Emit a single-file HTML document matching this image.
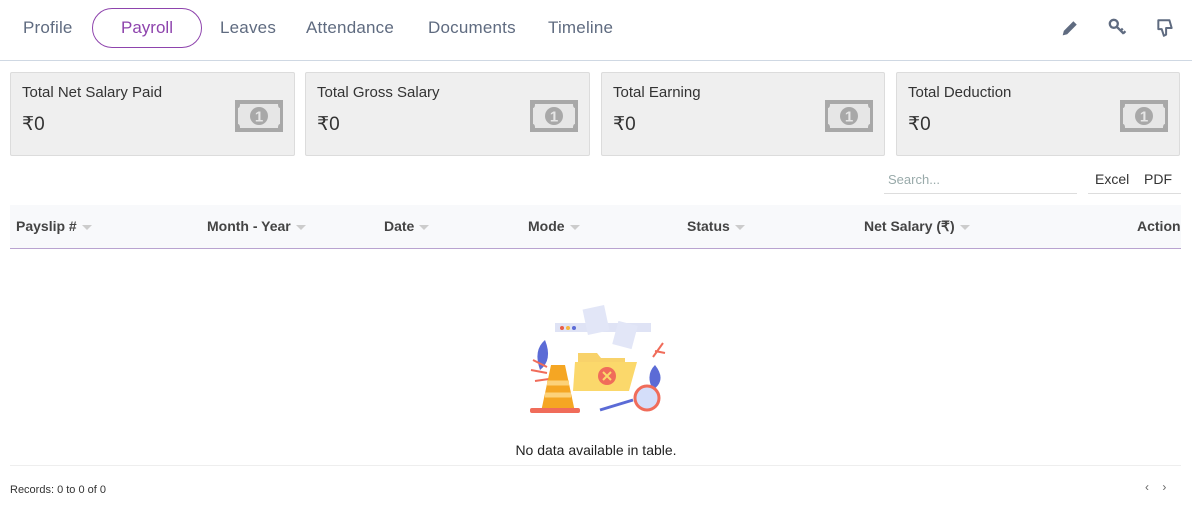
<!DOCTYPE html>
<html><head><meta charset="utf-8"><style>
*{margin:0;padding:0;box-sizing:border-box}
body{width:1192px;height:509px;background:#fff;font-family:"Liberation Sans",sans-serif;position:relative;overflow:hidden;color:#333}
.tab{position:absolute;top:18px;font-size:17px;color:#5f6b80;letter-spacing:0.2px}
.pill{position:absolute;left:92px;top:8px;width:110px;height:40px;border:1.5px solid #8e44ad;border-radius:20px;color:#8e44ad;font-size:17px;text-align:center;line-height:38px}
.hr{position:absolute;left:0;top:60px;width:1192px;height:1px;background:#cfd8e3}
.card{position:absolute;top:72px;height:84px;background:#efefef;border:1px solid #dcdcdc;border-radius:2px}
.card .t{position:absolute;left:11px;top:11px;font-size:15px;color:#333}
.card .v{position:absolute;left:11px;top:40px;font-size:19px;color:#333}
.card svg{position:absolute;right:11px;top:27px}
.th{position:absolute;top:218px;font-size:14px;font-weight:bold;color:#444}
.car{display:inline-block;width:0;height:0;border-left:5px solid transparent;border-right:5px solid transparent;border-top:5px solid #ccc;margin-left:5px;vertical-align:middle}
</style></head><body>
<div class="tab" style="left:23px">Profile</div>
<div class="pill">Payroll</div>
<div class="tab" style="left:220px">Leaves</div>
<div class="tab" style="left:306px">Attendance</div>
<div class="tab" style="left:428px">Documents</div>
<div class="tab" style="left:548px">Timeline</div>
<svg style="position:absolute;left:1061px;top:19px" width="18" height="18" viewBox="0 0 16 16"><path d="M1.5 14.5 L2.5 10.5 L11 2 L14 5 L5.5 13.5 Z" fill="#5f6b80"/></svg>
<svg style="position:absolute;left:1108px;top:18px" width="19" height="19" viewBox="0 0 18 18"><circle cx="5.5" cy="5.5" r="3.8" fill="none" stroke="#5f6b80" stroke-width="2.2"/><path d="M8 8 L15 15 M12 12 L14 10 M14.5 14.5 L16.5 12.5" stroke="#5f6b80" stroke-width="2.2" fill="none"/></svg>
<svg style="position:absolute;left:1156px;top:18px" width="18" height="20" viewBox="0 0 16 18"><path d="M2 2 H12 L14 9 H9 L9 15 L7 16 L5 10 H2 Z" fill="none" stroke="#5f6b80" stroke-width="1.8" stroke-linejoin="round"/></svg>
<div class="hr"></div>

<div class="card" style="left:10px;width:285px"><div class="t">Total Net Salary Paid</div><div class="v">₹0</div><svg width="48" height="32" viewBox="0 0 48 32"><rect width="48" height="32" fill="#a8a8a8"/><path d="M5 4 H43 Q43 8 45 8 V24 Q43 24 43 28 H5 Q5 24 3 24 V8 Q5 8 5 4Z" fill="#e6e6e6"/><circle cx="24" cy="16" r="9" fill="#a8a8a8"/><text x="24" y="21.5" font-size="15" font-weight="bold" fill="#e6e6e6" text-anchor="middle" font-family="Liberation Sans">1</text></svg></div>
<div class="card" style="left:305px;width:285px"><div class="t">Total Gross Salary</div><div class="v">₹0</div><svg width="48" height="32" viewBox="0 0 48 32"><rect width="48" height="32" fill="#a8a8a8"/><path d="M5 4 H43 Q43 8 45 8 V24 Q43 24 43 28 H5 Q5 24 3 24 V8 Q5 8 5 4Z" fill="#e6e6e6"/><circle cx="24" cy="16" r="9" fill="#a8a8a8"/><text x="24" y="21.5" font-size="15" font-weight="bold" fill="#e6e6e6" text-anchor="middle" font-family="Liberation Sans">1</text></svg></div>
<div class="card" style="left:601px;width:284px"><div class="t">Total Earning</div><div class="v">₹0</div><svg width="48" height="32" viewBox="0 0 48 32"><rect width="48" height="32" fill="#a8a8a8"/><path d="M5 4 H43 Q43 8 45 8 V24 Q43 24 43 28 H5 Q5 24 3 24 V8 Q5 8 5 4Z" fill="#e6e6e6"/><circle cx="24" cy="16" r="9" fill="#a8a8a8"/><text x="24" y="21.5" font-size="15" font-weight="bold" fill="#e6e6e6" text-anchor="middle" font-family="Liberation Sans">1</text></svg></div>
<div class="card" style="left:896px;width:284px"><div class="t">Total Deduction</div><div class="v">₹0</div><svg width="48" height="32" viewBox="0 0 48 32"><rect width="48" height="32" fill="#a8a8a8"/><path d="M5 4 H43 Q43 8 45 8 V24 Q43 24 43 28 H5 Q5 24 3 24 V8 Q5 8 5 4Z" fill="#e6e6e6"/><circle cx="24" cy="16" r="9" fill="#a8a8a8"/><text x="24" y="21.5" font-size="15" font-weight="bold" fill="#e6e6e6" text-anchor="middle" font-family="Liberation Sans">1</text></svg></div>

<div style="position:absolute;left:884px;top:172px;width:193px;font-size:13px;color:#9aa;padding-left:4px">Search...</div>
<div style="position:absolute;left:884px;top:193px;width:193px;height:1px;background:#ddd"></div>
<div style="position:absolute;left:1088px;top:193px;width:93px;height:1px;background:#ddd"></div>
<div style="position:absolute;left:1095px;top:171px;font-size:14px;color:#333">Excel</div>
<div style="position:absolute;left:1144px;top:171px;font-size:14px;color:#333">PDF</div>

<div style="position:absolute;left:10px;top:205px;width:1171px;height:44px;background:#f8f9fb;border-bottom:1.5px solid #b9a3d0"></div>
<div class="th" style="left:16px">Payslip #<span class="car"></span></div>
<div class="th" style="left:207px">Month - Year<span class="car"></span></div>
<div class="th" style="left:384px">Date<span class="car"></span></div>
<div class="th" style="left:528px">Mode<span class="car"></span></div>
<div class="th" style="left:687px">Status<span class="car"></span></div>
<div class="th" style="left:864px">Net Salary (₹)<span class="car"></span></div>
<div class="th" style="left:1137px">Action</div>

<svg style="position:absolute;left:525px;top:295px" width="145" height="125" viewBox="0 0 145 125">
<rect x="30" y="28" width="96" height="9" fill="#dfe3f5"/>
<circle cx="37" cy="33" r="2" fill="#e85d4a"/><circle cx="43" cy="33" r="2" fill="#f5b841"/><circle cx="49" cy="33" r="2" fill="#5b6bd6"/>
<rect x="60" y="12" width="22" height="26" fill="#e2e6f7" transform="rotate(-12 71 25)"/>
<rect x="90" y="28" width="20" height="24" fill="#e2e6f7" transform="rotate(15 100 40)"/>
<path d="M20 45 Q8 55 15 75 Q28 65 20 45Z" fill="#5b6bd6"/>
<path d="M130 70 Q120 80 128 95 Q142 85 130 70Z" fill="#5b6bd6"/>
<path d="M22 72 L8 65 M22 78 L6 75 M24 84 L10 86" stroke="#f06c5a" stroke-width="2"/>
<path d="M128 62 L138 48 M130 56 L140 58" stroke="#f06c5a" stroke-width="2"/>
<path d="M53 58 H72 L76 63 H100 V92 H53Z" fill="#f8d26a"/>
<path d="M50 67 H112 L104 96 H48Z" fill="#fbd86b"/>
<circle cx="82" cy="81" r="9" fill="#f06c5a"/>
<path d="M78 77 L86 85 M86 77 L78 85" stroke="#fbd86b" stroke-width="2"/>
<path d="M16 117 L26 70 H40 L50 117Z" fill="#f5a623"/>
<path d="M22 88 H44 M20 100 H46" stroke="#fcd27a" stroke-width="5"/>
<rect x="5" y="113" width="50" height="5" rx="2" fill="#f06c5a"/>
<path d="M75 115 L108 105" stroke="#5b6bd6" stroke-width="3"/>
<circle cx="122" cy="103" r="12" fill="#d4defa" stroke="#f06c5a" stroke-width="3"/>
</svg>

<div style="position:absolute;left:0;width:1192px;top:442px;text-align:center;font-size:14px;color:#222">No data available in table.</div>
<div style="position:absolute;left:10px;top:465px;width:1171px;height:1px;background:#eee"></div>
<div style="position:absolute;left:10px;top:484px;font-size:11px;color:#333">Records: 0 to 0 of 0</div>
<div style="position:absolute;left:1145px;top:480px;font-size:12px;color:#666">‹&nbsp;&nbsp;&nbsp;&nbsp;›</div>
</body></html>
